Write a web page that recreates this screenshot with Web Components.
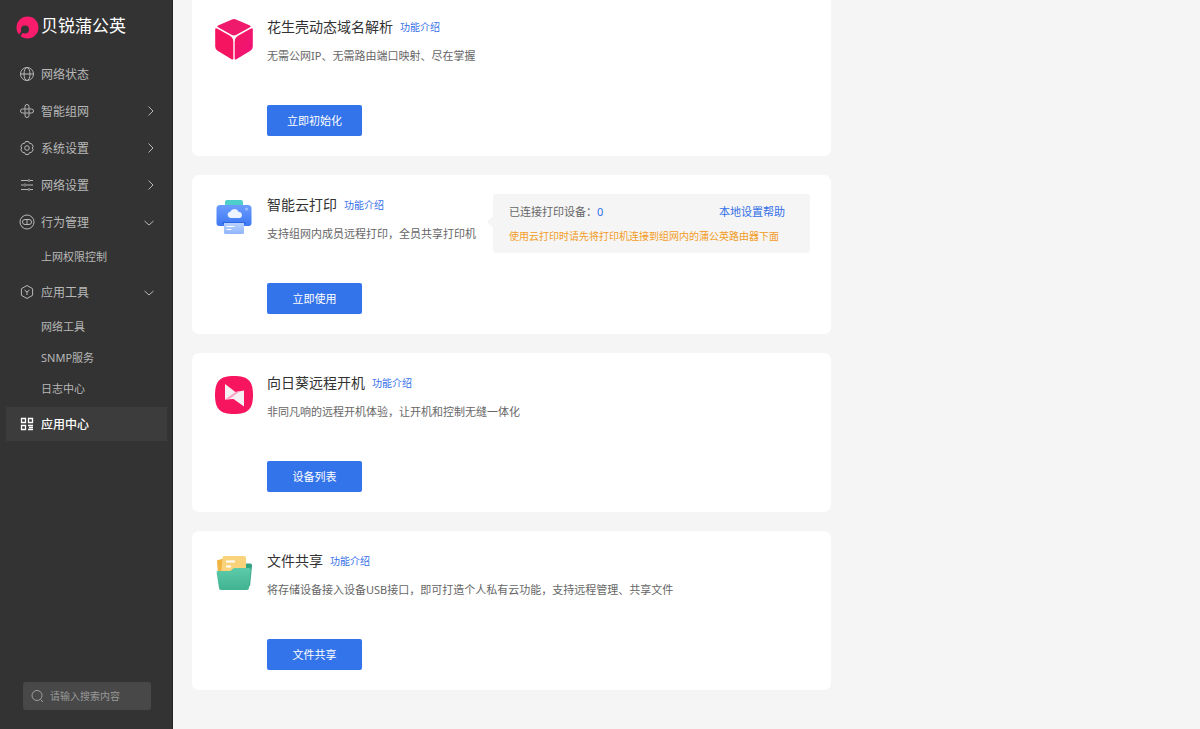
<!DOCTYPE html>
<html lang="zh-CN">
<head>
<meta charset="utf-8">
<title>贝锐蒲公英</title>
<style>
    body {
    margin: 0;
    background: #f5f5f5;
    font-family: "Noto Sans", "Noto Sans CJK SC", sans-serif;
    font-size: 11px;
    color: #666;
    }
</style>
</head>
<body>
<app-shell>
    <side-bar slot="side">
        <nav-item icon="globe" text="网络状态"></nav-item>
        <nav-item icon="mesh" text="智能组网" arrow="right"></nav-item>
        <nav-item icon="gear" text="系统设置" arrow="right"></nav-item>
        <nav-item icon="sliders" text="网络设置" arrow="right"></nav-item>
        <nav-item icon="toggle" text="行为管理" arrow="down">
            <sub-item text="上网权限控制"></sub-item>
        </nav-item>
        <nav-item icon="hexagon" text="应用工具" arrow="down">
            <sub-item text="网络工具"></sub-item>
            <sub-item text="SNMP服务"></sub-item>
            <sub-item text="日志中心"></sub-item>
        </nav-item>
        <nav-item icon="apps" text="应用中心" active></nav-item>
    </side-bar>

    <app-card first name="花生壳动态域名解析" action="立即初始化">
        <svg slot="icon" width="40" height="42" viewBox="0 0 40 42">
            <defs>
                <linearGradient id="cube" x1="0" y1="0" x2="1" y2="1"><stop offset="0" stop-color="#f5195f"/><stop offset="1" stop-color="#f0117b"/></linearGradient>
            </defs>
            <path d="M18 1.4Q20 .6 22 1.4L36 7.4Q37.600 8.300 36 9.200L22.500 16.800Q20 18 17.500 16.800L4 9.200Q2.400 8.300 4 7.400Z" fill="#ef1a6b"/>
            <path d="M1.200 11.500Q1.200 9.600 3 10.500L16 17.800Q19.300 19.800 19.300 24V40.600Q19.300 42 18 41.400L3.600 32.800Q1.200 31.300 1.200 28.500Z" fill="#f5145f"/>
            <path d="M38.800 11.500Q38.800 9.600 37 10.500L24 17.800Q20.700 19.800 20.700 24V40.600Q20.700 42 22 41.400L36.400 32.800Q38.800 31.300 38.800 28.500Z" fill="url(#cube)"/>
        </svg>
        无需公网IP、无需路由端口映射、尽在掌握
    </app-card>

    <app-card name="智能云打印" action="立即使用">
        <svg slot="icon" width="40" height="42" viewBox="0 0 40 42">
            <defs>
                <linearGradient id="body" x1="0" y1="0" x2="0" y2="1"><stop offset="0" stop-color="#6b9cff"/><stop offset="1" stop-color="#3d78f2"/></linearGradient>
                <linearGradient id="sheet" x1="0" y1="0" x2="0" y2="1"><stop offset="0" stop-color="#b9d2ff"/><stop offset="1" stop-color="#8fb5fd"/></linearGradient>
            </defs>
            <rect x="11" y="4" width="18" height="10" rx="2" fill="#4fcfcb"/>
            <path d="M6 9H34Q37.500 9 37.500 12.500V27Q37.500 30 34.500 30H5.500Q2.500 30 2.500 27V12.500Q2.500 9 6 9Z" fill="url(#body)"/>
            <circle cx="32.500" cy="13" r="1.500" fill="#9dc0ff"/>
            <path d="M16.500 22a3.200 3.200 0 0 1-.300-6.300a4.700 4.700 0 0 1 8.600.300a3 3 0 0 1 .200 6Z" fill="#eef4ff"/>
            <rect x="8" y="26" width="24" height="2" rx="1" fill="#2f66e4"/>
            <path d="M10 27H30V36.500Q30 38 28.500 38H11.500Q10 38 10 36.500Z" fill="url(#sheet)"/>
            <path d="M13 30.500H20M13 33.500H17" stroke="#fff" stroke-width="1.200" stroke-linecap="round"/>
        </svg>
        支持组网内成员远程打印，全员共享打印机
        <print-status slot="extra" count="0"></print-status>
    </app-card>

    <app-card name="向日葵远程开机" action="设备列表">
        <svg slot="icon" width="40" height="42" viewBox="0 0 40 42">
            <path d="M20 2C34 2 39 7 39 21S34 40 20 40S1 35 1 21S6 2 20 2Z" fill="#f8155f"/>
            <path d="M11 10L21.500 18L30 16.500V32.500L19.500 25L11 25.500Z" fill="#f6eff4"/>
            <path d="M11 25.500L21.500 18L26 17.300L15 25.300Z" fill="#f9a5c3"/>
        </svg>
        非同凡响的远程开机体验，让开机和控制无缝一体化
    </app-card>

    <app-card name="文件共享" action="文件共享">
        <svg slot="icon" width="40" height="42" viewBox="0 0 40 42">
            <defs>
                <linearGradient id="folder" x1="0" y1="0" x2="0" y2="1"><stop offset="0" stop-color="#5ccbaa"/><stop offset="1" stop-color="#41b391"/></linearGradient>
            </defs>
            <path d="M25 13L28 11.500H36Q38.300 11.500 38 14L36 34H25Z" fill="#32a380"/>
            <path d="M3 9Q3 8 4 8L12 6V22H4Z" fill="#f0b440"/>
            <path d="M10 4H30Q32 4 32 6V22H7L8.500 6Q8.700 4 10 4Z" fill="#fad27c"/>
            <path d="M12 9.500H21M12 14.500H17" stroke="#fff" stroke-width="2"/>
            <path d="M3.500 19H15.500Q17 19 18 17.500Q19 16 20.500 16H35Q37 16 36.800 18L35 36Q34.800 38 33 38H7Q5.200 38 5 36L2.600 20.500Q2.500 19 3.500 19Z" fill="url(#folder)"/>
        </svg>
        将存储设备接入设备USB接口，即可打造个人私有云功能，支持远程管理、共享文件
    </app-card>
</app-shell>

<script>
const icons = {
    globe: '<circle cx="8" cy="8" r="6.500"/><ellipse cx="8" cy="8" rx="3" ry="6.500"/><path d="M1.500 8H14.500"/>',
    mesh: '<path d="M6 9.500V3.500a2 2 0 0 1 4 0V6M6.500 6H12.500a2 2 0 0 1 0 4H10M10 6.500V12.500a2 2 0 0 1-4 0V10M9.500 10H3.500a2 2 0 0 1 0-4H6"/>',
    gear: '<path d="M6.500 1.500h3l.800 1.800 2 .200 1.900 2.700-.900 1.800.900 1.800-1.900 2.700-2 .200-.800 1.800h-3l-.800-1.800-2-.200-1.900-2.700.900-1.800-.900-1.800 1.900-2.700 2-.200z" stroke-linejoin="round"/><circle cx="8" cy="8" r="2.300"/>',
    sliders: '<path d="M2 3.500H9M11 3.500H14M10 2V5M2 8H5M7 8H14M6 6.500V9.500M2 12.500H9M11 12.500H14M10 11V14"/>',
    toggle: '<circle cx="8" cy="8" r="7"/><rect x="3.500" y="5.500" width="9" height="5" rx="2.500"/><path d="M8 5.500V10.500"/>',
    hexagon: '<path d="M8 1.500L13.600 4.700V11.300L8 14.500L2.400 11.300V4.700Z" stroke-linejoin="round"/><path d="M5.500 6L8 8L10.500 6M8 8V11"/>',
    apps: '<path d="M2.500 2.500H6.500V6.500H2.500ZM9.500 2.500H13.500V6.500H9.500ZM2.500 9.500H6.500V13.500H2.500ZM9 9.500H14M10 11.500H14M9 13.500H14" stroke-width="1.300"/>'
};

const arrows = {
    right: '<path d="M5.500 1.500L10 6L5.500 10.500"/>',
    down: '<path d="M1.500 5L6 9L10.500 5"/>'
};

class AppShell extends HTMLElement{
    constructor(){
        super();
        this.attachShadow({mode: 'open'}).innerHTML = `
            <style>
                :host {
                display: flex;
                min-height: 100vh;
                }
                main {
                flex: 1;
                display: flex;
                flex-direction: column;
                gap: 19px;
                padding: 0 19px 19px;
                }
            </style>
            <slot name="side"></slot>
            <main><slot></slot></main>
        `;
    }
}

class SideBar extends HTMLElement{
    constructor(){
        super();
        this.attachShadow({mode: 'open'}).innerHTML = `
            <style>
                :host {
                display: flex;
                flex-direction: column;
                flex: none;
                box-sizing: border-box;
                width: 173px;
                padding: 16px 5px 19px 6px;
                background: #333;
                border-right: 1px solid #262626;
                color: #b8b8b8;
                }
                .logo {
                display: flex;
                align-items: flex-start;
                gap: 2px;
                height: 24px;
                padding-left: 10px;
                margin-bottom: 17px;
                color: #fff;
                font-size: 17px;
                line-height: 20px;
                }
                nav {
                display: flex;
                flex-direction: column;
                gap: 3px;
                flex: 1;
                }
                .search {
                display: flex;
                align-items: center;
                gap: 6px;
                height: 28px;
                margin: 0 16px 0 17px;
                padding: 0 8px;
                border-radius: 3px;
                background: #484848;
                }
                .search svg {
                flex: none;
                }
                input {
                flex: 1;
                min-width: 0;
                padding: 0;
                border: 0;
                outline: 0;
                background: none;
                color: #fff;
                font: inherit;
                font-size: 10px;
                }
                input::placeholder {
                color: #999;
                }
            </style>
            <div class="logo">
                <svg width="23" height="24" viewBox="0 0 23 24">
                    <circle cx="11.500" cy="11.500" r="11" fill="#fb1c6b"/>
                    <circle cx="9" cy="13.500" r="4" fill="#333"/>
                    <path d="M7 14L3 21" stroke="#333" stroke-width="2"/>
                </svg>
                <span>贝锐蒲公英</span>
            </div>
            <nav><slot></slot></nav>
            <label class="search">
                <svg width="13" height="14" viewBox="0 0 13 14" fill="none" stroke="#a0a0a0"><circle cx="6" cy="6.500" r="5"/><path d="M9.500 10.500L12 13"/></svg>
                <input type="text" placeholder="请输入搜索内容" aria-label="请输入搜索内容">
            </label>
        `;
    }
}

class NavItem extends HTMLElement{
    connectedCallback(){
        const arrow = arrows[this.getAttribute('arrow')];
        this.attachShadow({mode: 'open'}).innerHTML = `
            <style>
                :host {
                display: block;
                }
                a {
                display: flex;
                align-items: center;
                gap: 6px;
                height: 34px;
                padding: 0 12px 0 13px;
                color: inherit;
                font-size: 12px;
                text-decoration: none;
                }
                span {
                flex: 1;
                }
                svg {
                fill: none;
                stroke: currentColor;
                }
                .sub {
                padding-top: 2px;
                }
                :host([active]) a {
                background: #3c3c3c;
                color: #fff;
                font-weight: 500;
                }
            </style>
            <a href="#">
                <svg width="16" height="16" viewBox="0 0 16 16">${icons[this.getAttribute('icon')]}</svg>
                <span>${this.getAttribute('text')}</span>
                ${arrow ? `<svg width="12" height="12" viewBox="0 0 12 12">${arrow}</svg>` : ''}
            </a>
            ${this.children.length ? '<div class="sub"><slot></slot></div>' : ''}
        `;
    }
}

class SubItem extends HTMLElement{
    connectedCallback(){
        this.attachShadow({mode: 'open'}).innerHTML = `
            <style>
                :host {
                display: block;
                }
                a {
                display: block;
                padding-left: 35px;
                line-height: 31px;
                color: inherit;
                text-decoration: none;
                }
            </style>
            <a href="#">${this.getAttribute('text')}</a>
        `;
    }
}

class AppCard extends HTMLElement{
    connectedCallback(){
        this.attachShadow({mode: 'open'}).innerHTML = `
            <style>
                :host {
                display: flex;
                align-items: flex-start;
                box-sizing: border-box;
                max-width: 639px;
                padding: 19px 21px 20px 22px;
                border-radius: 7px;
                background: #fff;
                }
                :host([first]) {
                padding-top: 16px;
                border-radius: 0 0 7px 7px;
                }
                .icon {
                flex: none;
                width: 40px;
                height: 42px;
                margin: 2px 13px 0 0;
                }
                .title {
                display: flex;
                align-items: center;
                gap: 7px;
                height: 20px;
                }
                h2 {
                margin: 0;
                color: #333;
                font-size: 14px;
                font-weight: 400;
                }
                a {
                color: #3370e8;
                font-size: 10px;
                text-decoration: none;
                }
                p {
                margin: 11px 0 40px;
                line-height: 18px;
                }
                button {
                display: block;
                width: 95px;
                height: 31px;
                padding: 0 0 2px;
                border: 0;
                border-radius: 2px;
                background: #3474eb;
                color: #fff;
                font: inherit;
                cursor: pointer;
                }
            </style>
            <div class="icon"><slot name="icon"></slot></div>
            <div>
                <div class="title"><h2>${this.getAttribute('name')}</h2><a href="#">功能介绍</a></div>
                <p><slot></slot></p>
                <button type="button">${this.getAttribute('action')}</button>
            </div>
            <slot name="extra"></slot>
        `;
    }
}

class PrintStatus extends HTMLElement{
    connectedCallback(){
        this.attachShadow({mode: 'open'}).innerHTML = `
            <style>
                :host {
                display: block;
                position: relative;
                flex: none;
                box-sizing: border-box;
                width: 317px;
                margin-left: auto;
                padding: 6px 25px 5px 16px;
                border-radius: 3px;
                background: #f5f5f5;
                line-height: 24px;
                }
                /* pointer towards the description */
                :host::before {
                content: "";
                position: absolute;
                left: -6px;
                top: 22px;
                border: 6px solid transparent;
                border-left-width: 0;
                border-right-color: #f5f5f5;
                }
                .row {
                display: flex;
                justify-content: space-between;
                }
                b, a {
                color: #3370e8;
                font-weight: 400;
                text-decoration: none;
                }
                .tip {
                color: #f39c1f;
                font-size: 10px;
                white-space: nowrap;
                }
            </style>
            <div class="row"><span>已连接打印设备：<b>${this.getAttribute('count')}</b></span><a href="#">本地设置帮助</a></div>
            <div class="tip">使用云打印时请先将打印机连接到组网内的蒲公英路由器下面</div>
        `;
    }
}

window.customElements.define('app-shell',AppShell);
window.customElements.define('side-bar',SideBar);
window.customElements.define('nav-item',NavItem);
window.customElements.define('sub-item',SubItem);
window.customElements.define('app-card',AppCard);
window.customElements.define('print-status',PrintStatus);
</script>
</body>
</html>
